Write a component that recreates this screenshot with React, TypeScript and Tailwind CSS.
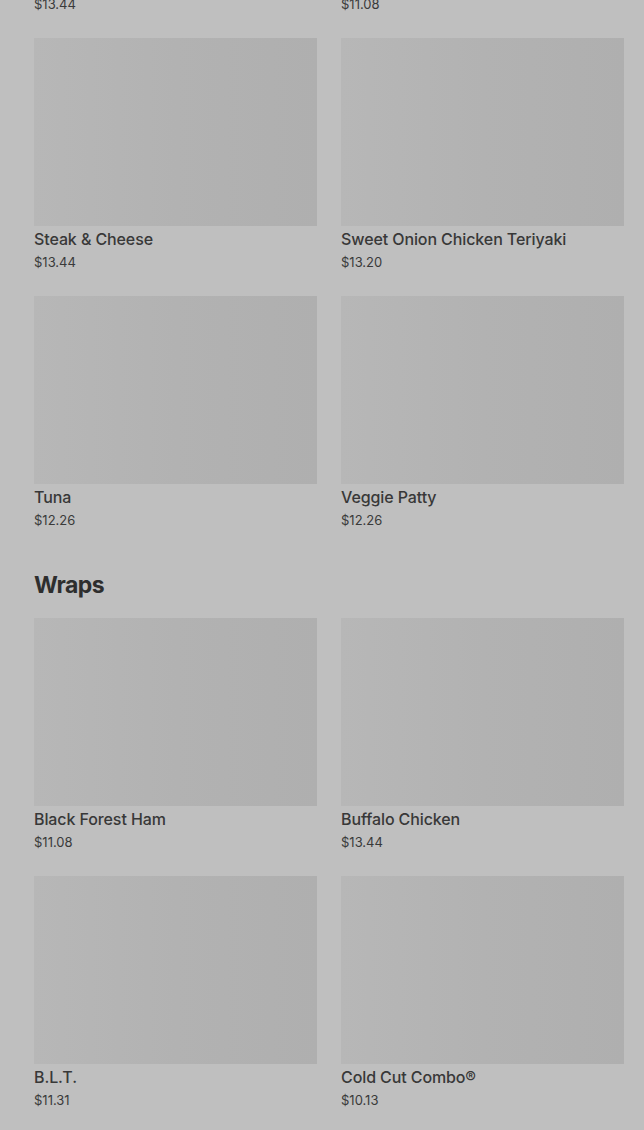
const sections: { title?: string; items: { name: string; price: string }[] }[] = [
  {
    items: [
      { name: 'Chicken & Bacon Ranch', price: '$13.44' },
      { name: 'Black Forest Ham', price: '$11.08' },
      { name: 'Steak & Cheese', price: '$13.44' },
      { name: 'Sweet Onion Chicken Teriyaki', price: '$13.20' },
      { name: 'Tuna', price: '$12.26' },
      { name: 'Veggie Patty', price: '$12.26' },
    ],
  },
  {
    title: 'Wraps',
    items: [
      { name: 'Black Forest Ham', price: '$11.08' },
      { name: 'Buffalo Chicken', price: '$13.44' },
      { name: 'B.L.T.', price: '$11.31' },
      { name: 'Cold Cut Combo®', price: '$10.13' },
      { name: 'Italian B.M.T.®', price: '$12.26' },
      { name: 'Oven Roasted Turkey', price: '$12.26' },
    ],
  },
]

function ItemCard({ name, price }: { name: string; price: string }) {
  return (
    <div className="flex flex-col">
      <div className="h-[188px] w-full bg-gradient-to-r from-[#b7b7b7] via-[#b2b2b2] to-[#afafaf]" />
      <div className="mt-[1px] text-base leading-6 font-medium tracking-[-0.1px] text-[#383838]">{name}</div>
      <div className="mt-[1px] text-[13px] leading-5 text-[#3a3a3a]">{price}</div>
    </div>
  )
}

export default function App() {
  return (
    <div
      className="h-[1130px] w-[644px] overflow-hidden bg-[#bfbfbf]"
      style={{ fontFamily: 'Inter, "Noto Sans", sans-serif' }}
    >
      <div className="mt-[-220px] pr-5 pl-[34px]">
        {sections.map((section, i) => (
          <section key={i} className={i > 0 ? 'mt-[39px]' : ''}>
            {section.title && (
              <h2 className="mb-[17px] text-[23px] leading-8 font-bold tracking-tight text-[#2e2e2e]">
                {section.title}
              </h2>
            )}
            <div className="grid grid-cols-2 gap-x-6 gap-y-6">
              {section.items.map((item) => (
                <ItemCard key={item.name} {...item} />
              ))}
            </div>
          </section>
        ))}
      </div>
    </div>
  )
}
